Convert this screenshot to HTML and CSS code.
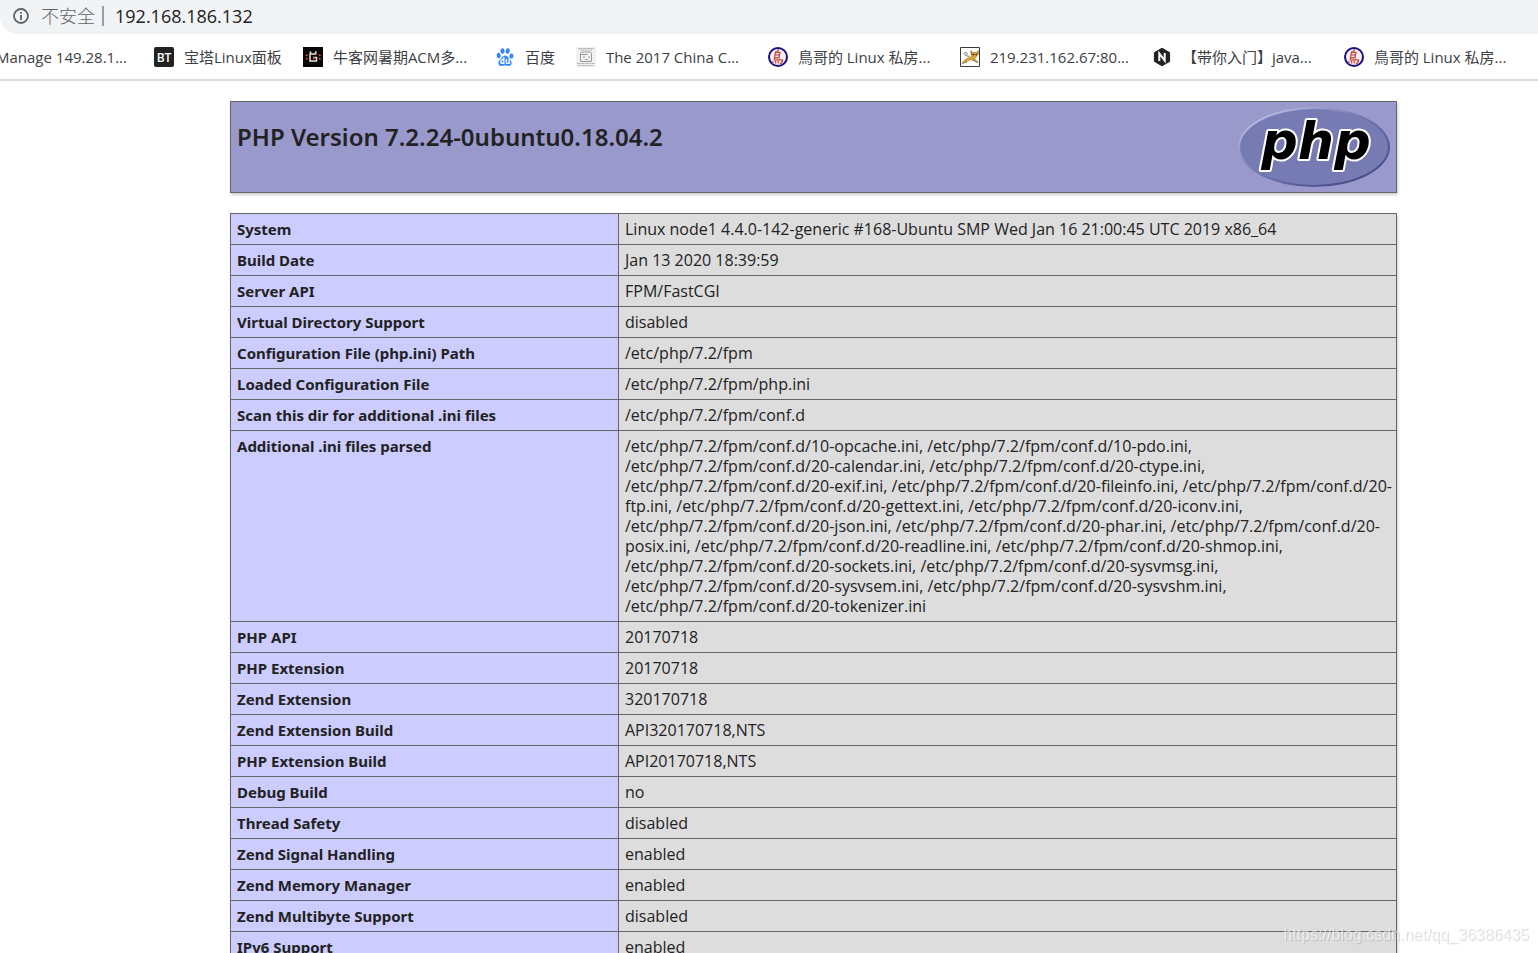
FILE: index.html
```html
<!DOCTYPE html>
<html lang="zh-CN">
<head>
<meta charset="utf-8">
<title>phpinfo()</title>
<link rel="stylesheet" href="styles.css">
</head>
<body>
<svg class="defs" aria-hidden="true">
  <symbol id="niao" viewBox="0 0 20 20">
    <circle cx="10" cy="10" r="9" fill="#fbeeee" stroke="#1a0f80" stroke-width="2"/>
    <path d="M10.500 2.800 8.800 5M7.500 5l4.500.5-1 5M7.500 5 6.300 12M7 7.700l4 .5M6.500 10.500l5 .3M6.200 12.800l8.300.2q.3 2.500-2 3.700M5 14.300l-.3 1.700M7.500 14.500l.3 1.500M10 14.500l.5 1.300" fill="none" stroke="#c0504d" stroke-width="1.300" stroke-linecap="round"/>
  </symbol>
</svg>

<header class="chrome">
  <form class="address">
    <svg class="info" viewBox="0 0 18 18" aria-hidden="true"><circle cx="9" cy="9" r="7" fill="none" stroke="#5f6368" stroke-width="1.800"/><path d="M9 8v5M9 5v1.800" stroke="#5f6368" stroke-width="1.800"/></svg>
    <label class="secure" for="url">不安全</label>
    <span class="bar"></span>
    <input class="url" id="url" type="text" value="192.168.186.132">
  </form>
  <nav class="bookmarks">
    <a class="mark cut" href="#"><span>Manage 149.28.1...</span></a>
    <a class="mark natural" href="#">
      <svg class="icon" viewBox="0 0 20 20"><rect width="20" height="20" rx="2" fill="#222"/><text class="bt" x="10" y="15" text-anchor="middle">BT</text></svg>
      <span>宝塔Linux面板</span></a>
    <a class="mark" href="#">
      <svg class="icon" viewBox="0 0 20 20"><rect width="20" height="20" fill="#080606"/><path d="M8 6 7 4.500M12 6l1.500-1.500M13.500 7H7v7h6.500v-3.500H10" fill="none" stroke="#e8e4e2" stroke-width="1.500"/><path d="M4.500 7.500 3 9M4.500 11 3 12.500M16 7.500 17.500 9M16 11l1.500 1.500M10 12l2-2" stroke="#d8573b" stroke-width="1.500"/></svg>
      <span>牛客网暑期ACM多...</span></a>
    <a class="mark natural" href="#">
      <svg class="icon" viewBox="0 0 20 20"><g fill="#3385ff"><ellipse cx="3.700" cy="8.500" rx="2" ry="2.700" transform="rotate(-12 3.700 8.500)"/><ellipse cx="7.500" cy="4" rx="2" ry="2.800"/><ellipse cx="12.700" cy="4" rx="2" ry="2.800" transform="rotate(12 12.700 4)"/><ellipse cx="16.400" cy="9" rx="2" ry="2.600" transform="rotate(12 16.400 9)"/><path d="M10 8.500c2.500 0 3 2.300 5 4.100 2.500 2.200 2 6.400-1.500 6.400-1.500 0-2-.4-3.500-.4S8 19 6.500 19C3 19 2.500 14.800 5 12.600 7 10.800 7.500 8.500 10 8.500z"/></g><text class="du" x="10" y="17" text-anchor="middle">du</text></svg>
      <span>百度</span></a>
    <a class="mark" href="#">
      <svg class="icon" viewBox="0 0 20 20"><rect width="20" height="20" fill="#f1f1f2"/><path d="M2 1.500h16M4 3h12M1 16.500h18M2 18.500h16" stroke="#b4b4b8" stroke-width="1" stroke-dasharray="2 .5"/><path d="M4.500 6.500l1-1.500h9l1 1.500v8h-11zM4.500 7.500h7M7 10h2M12 10h2M9 12.500h2.500" fill="none" stroke="#97999e"/></svg>
      <span>The 2017 China C...</span></a>
    <a class="mark" href="#"><svg class="icon"><use href="#niao"/></svg><span>鳥哥的 Linux 私房...</span></a>
    <a class="mark" href="#">
      <svg class="icon" viewBox="0 0 20 20"><path d="M.5.500h19v19H.5z" fill="#fff" stroke="#3a3a3a"/><path d="M1.500 16.500C3 13.500 7 10.500 11 9.500L11 3.500l2 1.500h3L18.200 3.500v4.500l-2 2.500-1 1.500 3.500 3-1.500.5-4.500-2.500c-3 0-5 1.500-7 2.500z" fill="#d3a23f"/><path d="M9.500 9.500C4 9 2.500 5 6 5.500c2 .3 1.500 2.500 0 2.500M11 3.500l.3 4.500M18.200 3.500v4M12 13l6 2.500M2 16.500l5-1.500" fill="none" stroke="#6b5c40" stroke-width=".8"/><circle cx="13.300" cy="7.500" r=".7"/><circle cx="16.200" cy="7.500" r=".7"/></svg>
      <span>219.231.162.67:80...</span></a>
    <a class="mark" href="#">
      <svg class="icon" viewBox="0 0 20 20"><path d="M10 1.200 17.600 5.600v8.800L10 18.800 2.400 14.400V5.600z" fill="#202224" stroke="#202224" stroke-linejoin="round"/><path d="M7.300 14V6.500L12.700 13.500V6" fill="none" stroke="#fff" stroke-width="2"/></svg>
      <span>【带你入门】java...</span></a>
    <a class="mark" href="#"><svg class="icon"><use href="#niao"/></svg><span>鳥哥的 Linux 私房...</span></a>
  </nav>
</header>

<main class="page">
  <div class="banner">
    <h1>PHP Version 7.2.24-0ubuntu0.18.04.2</h1>
    <svg class="logo" viewBox="0 0 152 80" role="img" aria-label="PHP logo">
      <defs>
        <linearGradient id="rim" x1="0" y1="0" x2="1" y2="1"><stop offset=".15" stop-color="#b5b8dc"/><stop offset=".45" stop-color="#777bb3"/><stop offset=".6" stop-color="#6468a8"/><stop offset=".85" stop-color="#484c89"/></linearGradient>
      </defs>
      <ellipse cx="76" cy="40" rx="76" ry="40" fill="url(#rim)"/>
      <ellipse cx="76" cy="40" rx="74" ry="38" fill="#777bb3"/>
      <text class="php" x="78" y="52" text-anchor="middle">php</text>
    </svg>
  </div>
  <table class="info-table">
    <tbody>
    <tr><th scope="row">System</th><td>Linux node1 4.4.0-142-generic #168-Ubuntu SMP Wed Jan 16 21:00:45 UTC 2019 x86_64</td></tr>
    <tr><th scope="row">Build Date</th><td>Jan 13 2020 18:39:59</td></tr>
    <tr><th scope="row">Server API</th><td>FPM/FastCGI</td></tr>
    <tr><th scope="row">Virtual Directory Support</th><td>disabled</td></tr>
    <tr><th scope="row">Configuration File (php.ini) Path</th><td>/etc/php/7.2/fpm</td></tr>
    <tr><th scope="row">Loaded Configuration File</th><td>/etc/php/7.2/fpm/php.ini</td></tr>
    <tr><th scope="row">Scan this dir for additional .ini files</th><td>/etc/php/7.2/fpm/conf.d</td></tr>
    <tr><th scope="row">Additional .ini files parsed</th><td>/etc/php/7.2/fpm/conf.d/10-opcache.ini, /etc/php/7.2/fpm/conf.d/10-pdo.ini,<br>/etc/php/7.2/fpm/conf.d/20-calendar.ini, /etc/php/7.2/fpm/conf.d/20-ctype.ini,<br>/etc/php/7.2/fpm/conf.d/20-exif.ini, /etc/php/7.2/fpm/conf.d/20-fileinfo.ini, /etc/php/7.2/fpm/conf.d/20-<br>ftp.ini, /etc/php/7.2/fpm/conf.d/20-gettext.ini, /etc/php/7.2/fpm/conf.d/20-iconv.ini,<br>/etc/php/7.2/fpm/conf.d/20-json.ini, /etc/php/7.2/fpm/conf.d/20-phar.ini, /etc/php/7.2/fpm/conf.d/20-<br>posix.ini, /etc/php/7.2/fpm/conf.d/20-readline.ini, /etc/php/7.2/fpm/conf.d/20-shmop.ini,<br>/etc/php/7.2/fpm/conf.d/20-sockets.ini, /etc/php/7.2/fpm/conf.d/20-sysvmsg.ini,<br>/etc/php/7.2/fpm/conf.d/20-sysvsem.ini, /etc/php/7.2/fpm/conf.d/20-sysvshm.ini,<br>/etc/php/7.2/fpm/conf.d/20-tokenizer.ini</td></tr>
    <tr><th scope="row">PHP API</th><td>20170718</td></tr>
    <tr><th scope="row">PHP Extension</th><td>20170718</td></tr>
    <tr><th scope="row">Zend Extension</th><td>320170718</td></tr>
    <tr><th scope="row">Zend Extension Build</th><td>API320170718,NTS</td></tr>
    <tr><th scope="row">PHP Extension Build</th><td>API20170718,NTS</td></tr>
    <tr><th scope="row">Debug Build</th><td>no</td></tr>
    <tr><th scope="row">Thread Safety</th><td>disabled</td></tr>
    <tr><th scope="row">Zend Signal Handling</th><td>enabled</td></tr>
    <tr><th scope="row">Zend Memory Manager</th><td>enabled</td></tr>
    <tr><th scope="row">Zend Multibyte Support</th><td>disabled</td></tr>
    <tr><th scope="row">IPv6 Support</th><td>enabled</td></tr>
    </tbody>
  </table>
</main>
<div class="watermark">https://blog.csdn.net/qq_36386435</div>
</body>
</html>
```
FILE: styles.css
```css
* { box-sizing: border-box; }

body {
  margin: 0;
  height: 100vh;
  display: flex;
  flex-direction: column;
  overflow: hidden;
  background: #fff;
  color: #222;
  font: 15px/20px "Open Sans", "Noto Sans CJK SC", sans-serif;
}

.defs { position: absolute; width: 0; height: 0; }

.chrome {
  flex: none;
  border-bottom: 2px solid #dadce3;
}

.address {
  display: flex;
  align-items: center;
  height: 34px;
  padding: 0 12px 2px;
  background: #f1f3f4;
  border-radius: 0 0 0 17px;
  font-size: 18px;
}
.info { width: 18px; height: 18px; margin-right: 11px; }
.secure { color: #5f6368; font-weight: 300; }
.bar { width: 2px; height: 20px; margin: 0 11px 0 7px; background: #9b9ea2; }
.url {
  flex: 1;
  min-width: 0;
  padding: 0;
  border: 0;
  outline: 0;
  background: transparent;
  color: #202124;
  font: inherit;
}

.bookmarks {
  display: flex;
  height: 45px;
  overflow: hidden;
}
.mark {
  flex: none;
  display: flex;
  align-items: center;
  gap: 10px;
  width: 192px;
  color: #3c4043;
  text-decoration: none;
  white-space: nowrap;
}
.mark.natural { width: auto; padding-right: 21px; }
.mark.cut {
  width: 154px;
  padding-right: 27px;
  justify-content: flex-end;
}
.icon { flex: none; width: 20px; height: 20px; }
.bt { fill: #fff; font: 600 12px "Open Sans", sans-serif; }
.du { fill: #fff; font: bold 8px "Open Sans", sans-serif; }

.page {
  flex: 1;
  min-height: 0;
  overflow: hidden;
  padding: 20px 141px 0 230px;
}

.banner {
  display: flex;
  justify-content: space-between;
  align-items: flex-start;
  height: 92px;
  margin-bottom: 20px;
  padding: 5px 6px;
  background: #99c;
  border: 1px solid #666;
  box-shadow: 1px 2px 3px #ccc;
}
h1 {
  margin: 13px 0 0;
  font: 600 24px/34px "Noto Sans", sans-serif;
}
.logo { width: 152px; height: 80px; }
.php {
  font: italic bold 51px "DejaVu Sans", sans-serif;
  fill: #000;
  stroke: #fff;
  stroke-width: 4px;
  stroke-linejoin: round;
  paint-order: stroke;
}

.info-table {
  width: 100%;
  table-layout: fixed;
  border-collapse: collapse;
  box-shadow: 1px 2px 3px #ccc;
}
.info-table th,
.info-table td {
  padding: 5px 6px;
  border: 1px solid #666;
  text-align: left;
  vertical-align: top;
}
.info-table th {
  width: 388px;
  background: #ccf;
  font-family: "Noto Sans", sans-serif;
  font-weight: 700;
}
.info-table td {
  background: #ddd;
  font-size: 16px;
  white-space: nowrap;
}

.watermark {
  position: fixed;
  right: 9px;
  bottom: 8px;
  color: rgba(255, 255, 255, .6);
  font: 16px/20px "Liberation Sans", sans-serif;
  text-shadow: 1px 1px 1px rgba(120, 120, 120, .3);
}
```
